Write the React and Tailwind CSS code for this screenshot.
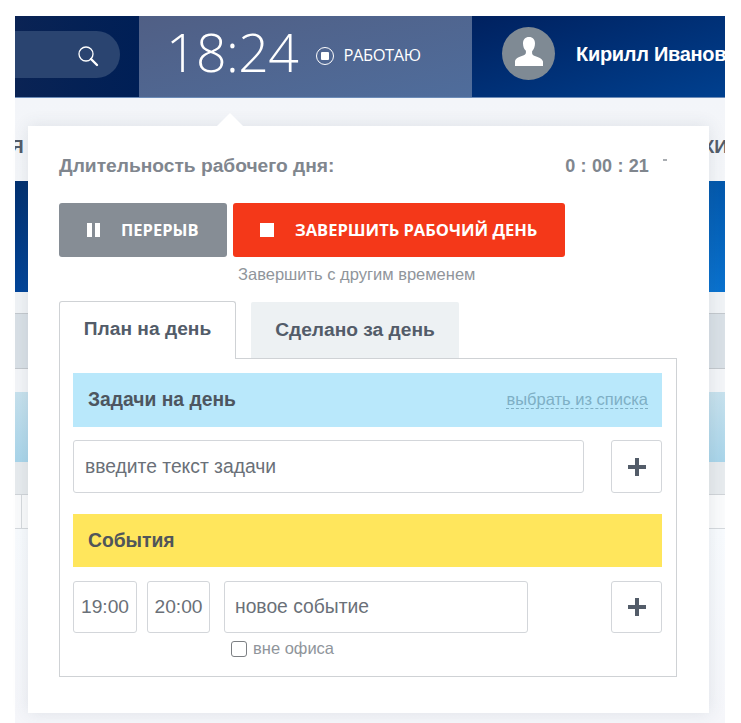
import React from "react";

const sans = "font-['Liberation_Sans',Arial,sans-serif]";
const open = "font-['Open_Sans',sans-serif]";

function Plus() {
  return (
    <button className="w-[51px] h-full shrink-0 bg-white border border-[#d3d6da] rounded-[3px] flex items-center justify-center">
      <svg width="18" height="18" viewBox="0 0 18 18"><path d="M7 0h4v7h7v4h-7v7H7v-7H0V7h7z" fill="#535c69" /></svg>
    </button>
  );
}

export default function App() {
  return (
    <div className={`relative w-[741px] h-[723px] overflow-hidden bg-white pt-4 pl-[15px] ${sans}`}>
      <div className="w-[710px] h-[707px] flex flex-col bg-[#fbfcfe] overflow-hidden">
        <header className="h-[82px] flex shrink-0 border-b border-[#6c8cb8]">
          <div className="w-[124px] bg-gradient-to-r from-[#0a2354] to-[#001f56] flex items-center">
            <div className="w-[105px] h-[47px] mb-[4px] rounded-r-[24px] bg-[#2a4470] flex items-center justify-end pr-[21px] pt-[3px]">
              <svg width="22" height="22" viewBox="0 0 22 22" fill="none" stroke="#fff">
                <circle cx="9" cy="9" r="7" strokeWidth="1.3" />
                <path d="M14 14l6 6" strokeWidth="2.4" strokeLinecap="round" />
              </svg>
            </div>
          </div>
          <div className="w-[333px] bg-gradient-to-br from-[#505f85] to-[#4f6d9c] flex items-center pl-[27px]">
            <span className={`${open} font-light text-[53.5px] leading-none text-white tracking-[-0.5px] mb-[9px]`}>18:24</span>
            <span className="ml-[18px] mb-[2px] w-[18px] h-[18px] rounded-full border border-white flex items-center justify-center">
              <span className="w-[8px] h-[8px] bg-white rounded-[1px]" />
            </span>
            <span className={`${open} ml-[9px] mb-[3px] text-[16.5px] text-white tracking-[-0.4px]`}>РАБОТАЮ</span>
          </div>
          <div className="flex-1 min-w-0 bg-gradient-to-br from-[#00215f] to-[#00408f] flex items-center pl-[30px] overflow-hidden">
            <div className="w-[53px] h-[53px] mb-[7px] shrink-0 rounded-full bg-[#7f8a94] flex items-center justify-center overflow-hidden">
              <svg width="28" height="29" viewBox="0 0 28 29" fill="#fff" className="mb-[3px]">
                <path d="M14 0c3.800 0 6 2.500 6 6.500 0 3.300-1.300 6-2.900 7.700v1.700c0 1.300.9 2.200 2.800 3 3.500 1.400 7.200 2.300 8.100 5.600V29H0v-5c.9-3.300 4.600-4.200 8.100-5.600 1.900-.8 2.800-1.700 2.800-3v-1.700C9.300 12.500 8 9.800 8 6.500 8 2.500 10.200 0 14 0z" />
              </svg>
            </div>
            <span className="ml-[21px] font-bold text-[20px] text-white tracking-[-0.3px] whitespace-nowrap mb-[6px]">Кирилл Иванов</span>
          </div>
        </header>

        <div className="h-[83px] shrink-0 bg-gradient-to-b from-[#f3f5f9] to-[#f4f6f9] flex justify-between items-start text-[19px] font-bold text-[#535c69] pt-[35px] relative">
          <span className="-ml-[5px]">Я</span>
          <span className="-mr-[3px] whitespace-nowrap">КИ</span>
        </div>
        <div className="h-[111px] shrink-0 flex">
          <div className="w-[13px] bg-gradient-to-b from-[#02306f] to-[#02459a]" />
          <div className="flex-1" />
          <div className="w-[16px] bg-gradient-to-b from-[#0358ac] to-[#0a72cf]" />
        </div>
        <div className="h-[21px] shrink-0 bg-[#f0f3f6]" />
        <div className="h-[56px] shrink-0 bg-[#d9e0e6] border-y border-[#c3c8cd]" />
        <div className="h-[23px] shrink-0 bg-[#f3f5f8]" />
        <div className="h-[70px] shrink-0 bg-gradient-to-b from-[#c7e1ed] to-[#a9d5ea]" />
        <div className="h-[33px] shrink-0 bg-[#e7ebee] border-b border-[#d0d4d8]" />
        <div className="h-[34px] shrink-0 bg-[#fafbfc] border-b border-[#d5d9dd] pl-[6px]">
          <div className="w-[1px] h-full bg-[#d5d9dd]" />
        </div>
        <div className="flex-1 bg-gradient-to-b from-[#f8fbfe] to-[#f5f6fa]" />
      </div>

      {/* Popup */}
      <div className="absolute left-[28px] top-[126px] w-[681px] h-[587px] bg-white shadow-[0_0_16px_rgba(60,70,90,0.12)] pt-[28px] pl-[31px] pr-[32px]">
        <div className="absolute left-[189px] -top-[13px] w-0 h-0 border-x-[13px] border-x-transparent border-b-[13px] border-b-white" />
        <div className="flex items-center justify-between h-[24px] font-bold text-[#80868e]">
          <span className="text-[19.2px]">Длительность рабочего дня:</span>
          <span className="text-[18px] mr-[28px] relative tracking-[0.15px]">
            0 : 00 : 21
            <span className="absolute -right-[18px] top-[6px] w-[4px] h-[2px] bg-[#a9adb2]" />
          </span>
        </div>

        <div className="flex gap-[6px] mt-[25px] h-[54px]">
          <button className={`${open} w-[168px] rounded-[3px] bg-[#868d95] text-white flex items-center text-[16.5px] font-bold pl-[28px]`}>
            <span className="flex gap-[3px] mr-[21px]">
              <span className="w-[5px] h-[14px] bg-white" />
              <span className="w-[5px] h-[14px] bg-white" />
            </span>
            ПЕРЕРЫВ
          </button>
          <button className={`${open} w-[332px] rounded-[3px] bg-[#f43819] text-white flex items-center text-[16.5px] font-bold pl-[27px]`}>
            <span className="w-[14px] h-[14px] bg-white mr-[21px]" />
            ЗАВЕРШИТЬ РАБОЧИЙ ДЕНЬ
          </button>
        </div>
        <div className="mt-[8px] ml-[179px] h-[18px] leading-[18px] text-[16.5px] text-[#90959b]">Завершить с другим временем</div>

        <div className="flex mt-[18px] h-[58px] items-end relative z-10 -mb-[1px] text-[19.2px] font-bold text-[#535c69]">
          <div className="w-[177px] h-[58px] bg-white border border-[#cfd2d5] border-b-0 rounded-t-[3px] flex items-center justify-center pb-[2px]">План на день</div>
          <div className="ml-[15px] w-[208px] h-[56px] mb-[1px] bg-[#edf1f3] rounded-t-[2px] flex items-center justify-center">Сделано за день</div>
        </div>

        <div className="relative w-[618px] h-[319px] border border-[#cfd2d5] pt-[14px] pl-[13px] pr-[14px]">
          <div className="h-[54px] bg-[#b9e8fb] flex items-center justify-between pl-[15px] pr-[14px]">
            <span className="text-[19.3px] font-bold text-[#4d5660]">Задачи на день</span>
            <span className="text-[16.5px] leading-[17px] text-[#7eafc5] border-b border-dashed border-[#7eafc5]">выбрать из списка</span>
          </div>
          <div className="flex justify-between h-[53px] mt-[13px]">
            <div className="w-[511px] bg-white border border-[#d3d6da] rounded-[3px] flex items-center pl-[11px] pt-[2px] text-[19.3px] text-[#6a7078]">введите текст задачи</div>
            <Plus />
          </div>
          <div className="h-[53px] mt-[21px] bg-[#ffe65c] flex items-center pl-[15px] pt-[2px] text-[19.3px] font-bold text-[#50555a]">События</div>
          <div className="flex h-[52px] mt-[14px]">
            <div className="w-[64px] border border-[#d3d6da] rounded-[3px] flex items-center justify-center text-[19.2px] text-[#6a7078]">19:00</div>
            <div className="ml-[10px] w-[63px] border border-[#d3d6da] rounded-[3px] flex items-center justify-center text-[19.2px] text-[#6a7078]">20:00</div>
            <div className="ml-[14px] w-[304px] border border-[#d3d6da] rounded-[3px] flex items-center pl-[10px] text-[19.3px] text-[#6a7078]">новое событие</div>
            <div className="ml-auto h-full"><Plus /></div>
          </div>
          <div className="flex items-center ml-[158px] mt-[7px] text-[16.5px] text-[#90959b] h-[17px]">
            <span className="w-[16px] h-[16px] bg-white border border-[#7c7f83] rounded-[3px] mr-[6px]" />
            вне офиса
          </div>
        </div>
      </div>
    </div>
  );
}
